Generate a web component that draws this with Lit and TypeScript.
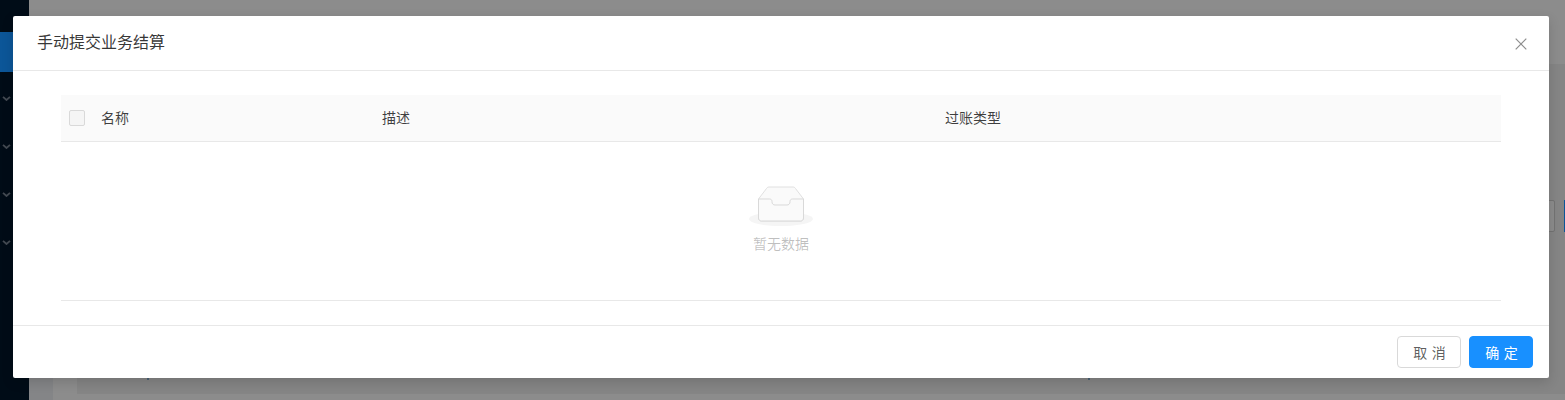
import { LitElement, html, css } from "lit";
import { customElement } from "lit/decorators.js";

@customElement("app-root")
export class AppRoot extends LitElement {
  static styles = css`
    :host {
      display: block;
      position: relative;
      width: 1565px;
      height: 400px;
      overflow: hidden;
      font-family: "Liberation Sans", "Noto Sans CJK SC", sans-serif;
      font-size: 14px;
      color: rgba(0, 0, 0, 0.65);
      background: #8c8c8c;
    }
    .page {
      display: flex;
      height: 400px;
    }
    .side {
      width: 29px;
      flex: none;
      background: #000c17;
      display: flex;
      flex-direction: column;
    }
    .side-active {
      height: 40px;
      margin-top: 32px;
      background: #0c5698;
    }
    .chevs {
      display: flex;
      flex-direction: column;
      gap: 43px;
      margin-top: 24px;
    }
    .chev {
      display: block;
      width: 9px;
      height: 5px;
      margin-left: 2px;
      color: #434a52;
    }
    .main {
      flex: 1;
      min-width: 0;
      display: flex;
      flex-direction: column;
    }
    .back-top {
      height: 64px;
      flex: none;
      background: #8c8c8c;
    }
    .back-body {
      flex: 1;
      min-height: 0;
      background: #848587;
      padding-left: 24px;
      display: flex;
    }
    .back-card {
      flex: 1;
      min-width: 0;
      background: #8c8c8c;
      padding-left: 24px;
      padding-bottom: 6px;
      display: flex;
    }
    .back-inner {
      flex: 1;
      min-width: 0;
      background: #858585;
      display: flex;
      flex-direction: column;
      justify-content: space-between;
    }
    .tools {
      display: flex;
      justify-content: flex-end;
      margin-top: 136px;
    }
    .tool-input {
      width: 120px;
      height: 32px;
      box-sizing: border-box;
      border: 1px solid #737373;
      border-radius: 2px;
      background: #8c8c8c;
    }
    .tool-btn {
      width: 1px;
      height: 32px;
      margin-left: 9px;
      background: #0c5698;
    }
    .marks {
      display: flex;
      padding-bottom: 14px;
    }
    .mark {
      width: 2px;
      height: 2px;
      background: #4a6275;
    }
    .mark-a {
      margin-left: 70px;
    }
    .mark-b {
      margin-left: 939px;
    }
    .modal {
      position: absolute;
      left: 13px;
      top: 16px;
      width: 1536px;
      height: 362px;
      background: #fff;
      border-radius: 2px;
      box-shadow: 0 4px 12px rgba(0, 0, 0, 0.15);
      display: flex;
      flex-direction: column;
      box-sizing: border-box;
    }
    .header {
      height: 55px;
      box-sizing: border-box;
      flex: none;
      border-bottom: 1px solid #e8e8e8;
      padding: 0 24px;
      display: flex;
      align-items: center;
      justify-content: space-between;
      font-size: 16px;
      line-height: 22px;
      color: rgba(0, 0, 0, 0.8);
    }
    .close {
      width: 12px;
      height: 12px;
      color: rgba(0, 0, 0, 0.45);
      margin: 1px -2px 0 0;
      display: block;
    }
    .body {
      flex: 1;
      padding: 24px 48px;
      box-sizing: border-box;
      display: flex;
      flex-direction: column;
    }
    .thead {
      height: 47px;
      flex: none;
      box-sizing: border-box;
      background: #fafafa;
      border-bottom: 1px solid #e8e8e8;
      display: grid;
      grid-template-columns: 40px 281px 563px 1fr;
      align-items: center;
      padding-bottom: 1px;
      color: rgba(0, 0, 0, 0.75);
      font-size: 14px;
      line-height: 20px;
    }
    .check-cell {
      padding: 1px 0 0 8px;
    }
    .check {
      display: block;
      width: 16px;
      height: 16px;
      box-sizing: border-box;
      background: #f5f5f5;
      border: 1px solid #d9d9d9;
      border-radius: 2px;
    }
    .empty {
      flex: 1;
      box-sizing: border-box;
      border-bottom: 1px solid #e8e8e8;
      display: flex;
      flex-direction: column;
      align-items: center;
      padding-top: 44px;
      color: rgba(0, 0, 0, 0.25);
      font-size: 14px;
      line-height: 20px;
    }
    .empty svg {
      display: block;
      width: 64px;
      height: 41px;
    }
    .empty span {
      margin-top: 7px;
    }
    .footer {
      height: 53px;
      box-sizing: border-box;
      flex: none;
      border-top: 1px solid #e8e8e8;
      padding: 10px 16px;
      display: flex;
      justify-content: flex-end;
      gap: 8px;
    }
    .btn {
      width: 64px;
      height: 32px;
      box-sizing: border-box;
      border-radius: 4px;
      border: 1px solid #d9d9d9;
      background: #fff;
      font: inherit;
      font-size: 14px;
      color: rgba(0, 0, 0, 0.65);
      letter-spacing: 4.4px;
      padding: 0 0 0 5.4px;
    }
    .primary {
      background: #1890ff;
      border-color: #1890ff;
      color: #fff;
    }
  `;

  render() {
    const chev = html`<svg class="chev" viewBox="0 0 9 5"><path d="M1 .8l3.500 3.200L8 .8" fill="none" stroke="currentColor" stroke-width="1.800"/></svg>`;
    return html`
      <div class="page">
        <div class="side">
          <div class="side-active"></div>
          <div class="chevs">${chev}${chev}${chev}${chev}</div>
        </div>
        <div class="main">
          <div class="back-top"></div>
          <div class="back-body">
            <div class="back-card">
              <div class="back-inner">
                <div class="tools">
                  <div class="tool-input"></div>
                  <div class="tool-btn"></div>
                </div>
                <div class="marks">
                  <div class="mark mark-a"></div>
                  <div class="mark mark-b"></div>
                </div>
              </div>
            </div>
          </div>
        </div>
      </div>
      <div class="modal">
        <div class="header">
          <div>手动提交业务结算</div>
          <svg class="close" viewBox="0 0 12 12"><path d="M.7.7l10.600 10.600M11.300.7L.7 11.300" fill="none" stroke="currentColor" stroke-width="1.200"/></svg>
        </div>
        <div class="body">
          <div class="thead">
            <div class="check-cell"><span class="check"></span></div>
            <div>名称</div>
            <div>描述</div>
            <div>过账类型</div>
          </div>
          <div class="empty">
            <svg viewBox="0 0 64 41">
              <ellipse cx="32" cy="33" rx="32" ry="7" fill="#f5f5f5"/>
              <path d="M9.500 13L17.500 2.500C18 1.600 19 1 20 1h24c1 0 2 .6 2.500 1.500L54.500 13V32c0 1.700-1.300 3-3 3h-39c-1.700 0-3-1.300-3-3z" fill="#fafafa" stroke="#e0e0e0"/>
              <path d="M9.500 13h11c1.500 0 2.500 1 2.500 2.500v.5c0 1.700 1.300 3 3 3h12c1.700 0 3-1.300 3-3v-.5c0-1.500 1-2.500 2.500-2.500h11V32c0 1.700-1.300 3-3 3h-39c-1.700 0-3-1.300-3-3z" fill="#fafafa" stroke="#d9d9d9"/>
            </svg>
            <span>暂无数据</span>
          </div>
        </div>
        <div class="footer">
          <button class="btn">取消</button>
          <button class="btn primary">确定</button>
        </div>
      </div>
    `;
  }
}
